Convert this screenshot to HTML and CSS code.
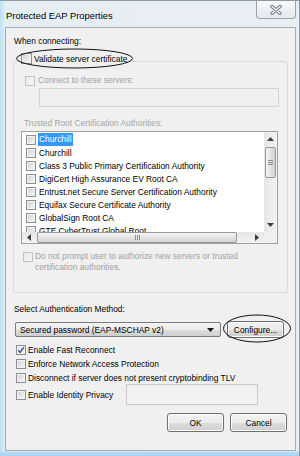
FILE: index.html
```html
<!DOCTYPE html>
<html>
<head>
<meta charset="utf-8">
<link rel="stylesheet" href="styles.css">
</head>
<body>
<div class="window">
  <div class="titlebar">
    <span class="title">Protected EAP Properties</span>
    <div class="close">
      <svg width="12" height="10" viewBox="0 0 12 10">
        <path d="M2 1.5 L10 8.5 M10 1.5 L2 8.5" stroke="#6e7884" stroke-width="3.4" stroke-linecap="round"/>
        <path d="M2 1.5 L10 8.5 M10 1.5 L2 8.5" stroke="#eef1f4" stroke-width="1.6" stroke-linecap="round"/>
      </svg>
    </div>
  </div>
  <div class="client">
    <div class="when">When connecting:</div>
    <div class="group">
      <div class="legend"><span class="cb big"></span><span>Validate server certificate</span></div>
      <div class="row connect dis"><span class="cb off"></span><span>Connect to these servers:</span></div>
      <div class="servers"></div>
      <div class="trusted">Trusted Root Certification Authorities:</div>
      <div class="list">
        <div class="items">
          <div class="item"><span class="cb"></span><span class="sel">Churchill</span></div>
          <div class="item"><span class="cb"></span><span class="txt">Churchill</span></div>
          <div class="item"><span class="cb"></span><span class="txt">Class 3 Public Primary Certification Authority</span></div>
          <div class="item"><span class="cb"></span><span class="txt">DigiCert High Assurance EV Root CA</span></div>
          <div class="item"><span class="cb"></span><span class="txt">Entrust.net Secure Server Certification Authority</span></div>
          <div class="item"><span class="cb"></span><span class="txt">Equifax Secure Certificate Authority</span></div>
          <div class="item"><span class="cb"></span><span class="txt">GlobalSign Root CA</span></div>
          <div class="item"><span class="cb"></span><span class="txt">GTE CyberTrust Global Root</span></div>
        </div>
        <div class="vscroll">
          <div class="arrow"><svg width="7" height="4" viewBox="0 0 7 4"><path d="M0 4 L3.5 0 L7 4Z" fill="#3c3c3c"/></svg></div>
          <div class="vthumb"><span class="grip"></span><span class="grip"></span><span class="grip"></span></div>
          <div class="spacer"></div>
          <div class="arrow"><svg width="7" height="4" viewBox="0 0 7 4"><path d="M0 0 L3.5 4 L7 0Z" fill="#3c3c3c"/></svg></div>
        </div>
        <div class="hscroll">
          <div class="arrow"><svg width="4" height="7" viewBox="0 0 4 7"><path d="M4 0 L0 3.5 L4 7Z" fill="#3c3c3c"/></svg></div>
          <div class="hthumb"><span class="vgrip"></span><span class="vgrip"></span><span class="vgrip"></span></div>
          <div class="spacer"></div>
          <div class="arrow"><svg width="4" height="7" viewBox="0 0 4 7"><path d="M0 0 L4 3.5 L0 7Z" fill="#3c3c3c"/></svg></div>
        </div>
        <div class="corner"></div>
      </div>
      <div class="noprompt dis"><span class="cb off"></span><span>Do not prompt user to authorize new servers or trusted<br>certification authorities.</span></div>
    </div>
    <div class="method-label">Select Authentication Method:</div>
    <div class="method-row">
      <div class="select"><span>Secured password (EAP-MSCHAP v2)</span>
        <svg width="7" height="4" viewBox="0 0 7 4"><path d="M0 0 L3.5 4 L7 0Z" fill="#1a1a1a"/></svg>
      </div>
      <div class="btn configure">Configure...</div>
    </div>
    <div class="checks">
      <div class="check"><span class="cb checked"><svg width="8" height="8" viewBox="0 0 8 8"><path d="M1.2 4.2 L3.1 6.4 L6.9 1.2" fill="none" stroke="#3d5aa0" stroke-width="1.5"/></svg></span><span>Enable Fast Reconnect</span></div>
      <div class="check"><span class="cb"></span><span>Enforce Network Access Protection</span></div>
      <div class="check"><span class="cb"></span><span>Disconnect if server does not present cryptobinding TLV</span></div>
      <div class="check identity"><span class="cb"></span><span class="idlabel">Enable Identity Privacy</span><div class="idfield"></div></div>
    </div>
    <div class="buttons">
      <div class="btn">OK</div>
      <div class="btn">Cancel</div>
    </div>
  </div>
</div>
<svg class="marks" width="300" height="456" viewBox="0 0 300 456">
  <ellipse cx="74.5" cy="58.5" rx="58" ry="9.5" fill="none" stroke="#111" stroke-width="1"/>
  <ellipse cx="257" cy="328.5" rx="33.5" ry="13.5" fill="none" stroke="#111" stroke-width="1"/>
</svg>
</body>
</html>
```
FILE: styles.css
```css
* { box-sizing: border-box; }
html, body { margin: 0; padding: 0; }
body {
  width: 300px;
  height: 456px;
  overflow: hidden;
  position: relative;
  font-family: "Liberation Sans", Arial, sans-serif;
  font-size: 8.4px;
  color: #000;
  background: #fff;
}
.window {
  width: 300px;
  height: 456px;
  display: flex;
  flex-direction: column;
  border-top: 1px solid #8d99a5;
  border-right: 1px solid #8d99a5;
  background:
    linear-gradient(to bottom, transparent 450px, #b9dcf3 451px, #a6cfee 456px),
    linear-gradient(to right, #b8e2f4 0, #e6edf3 5px, #e9eef3 100%);
}
.titlebar {
  height: 26px;
  flex: none;
  display: flex;
  justify-content: space-between;
  align-items: flex-start;
}
.title {
  padding: 8px 0 0 6px;
  font-size: 9.4px;
  line-height: 13px;
  color: #000;
}
.close {
  width: 40px;
  height: 18px;
  margin-right: 3px;
  border: 1px solid #9aa4ae;
  border-top: none;
  border-radius: 0 0 4px 4px;
  background: linear-gradient(#f8fafc, #e4e9ee);
  display: flex;
  align-items: center;
  justify-content: center;
}
.client {
  flex: 1;
  margin: 0 3px 5px 5px;
  border: 1px solid #a4aeb8;
  background: #f0f0f0;
  display: flex;
  flex-direction: column;
}
.when { margin: 7px 0 0 8px; line-height: 12px; }
.group {
  flex: none;
  margin: 14px 0 0 7px;
  width: 275px;
  height: 232px;
  border: 1px solid #d6dbe0;
  border-radius: 3px;
  display: flex;
  flex-direction: column;
}
.legend {
  margin: -10px 0 0 6px;
  height: 13px;
  width: max-content;
  padding: 0 2px 0 1px;
  background: #f0f0f0;
  display: flex;
  align-items: center;
  gap: 2px;
}
.cb {
  flex: none;
  width: 10px;
  height: 10px;
  border: 1px solid #8e8f8f;
  background: linear-gradient(135deg, #c9cdd2 0%, #e6e7e8 55%, #f7f7f7 100%);
  box-shadow: inset 0 0 0 1px #f3f3f3;
  display: flex;
  align-items: center;
  justify-content: center;
}
.cb.big { width: 11px; height: 11px; }
.cb.off {
  border-color: #c3c3c3;
  background: linear-gradient(135deg, #e8e8e8, #f6f6f6);
  box-shadow: none;
}
.cb.checked { background: linear-gradient(135deg, #dfe3e8, #f8f8f8); }
.dis { color: #a2a2a2; }
.row { display: flex; align-items: center; gap: 3px; line-height: 13px; }
.connect { margin: 9px 0 0 11px; }
.servers {
  margin: 1px 0 0 25px;
  width: 240px;
  height: 19px;
  border: 1px solid #d2d5d8;
  background: #f0f0f0;
}
.trusted { margin: 10px 0 0 10px; line-height: 12px; color: #a6a6a6; }
.list {
  margin: 2px 0 0 7px;
  width: 257px;
  height: 113px;
  border: 1px solid #a0a0a0;
  background: #fff;
  display: grid;
  grid-template-columns: 1fr 13px;
  grid-template-rows: 1fr 11px;
}
.items { overflow: hidden; padding-top: 1px; }
.item {
  display: flex;
  align-items: center;
  height: 13px;
  padding-left: 4px;
  gap: 2px;
  white-space: nowrap;
}
.item .txt { padding: 0 1px; }
.sel {
  background: #3399ff;
  color: #fff;
  padding: 0 1px;
  line-height: 13px;
}
.vscroll {
  display: flex;
  flex-direction: column;
  background: linear-gradient(to right, #e6e6e6, #f3f3f3);
}
.vscroll .arrow { height: 14px; display: flex; align-items: center; justify-content: center; }
.vthumb {
  margin: 1px 0 0 1px;
  width: 11px;
  height: 31px;
  border: 1px solid #989898;
  border-radius: 2px;
  background: linear-gradient(to right, #f4f4f4, #e4e4e4 50%, #d2d2d2);
  display: flex;
  flex-direction: column;
  align-items: center;
  justify-content: center;
  gap: 1px;
}
.grip { width: 5px; height: 1px; background: #8a8a8a; }
.spacer { flex: 1; }
.hscroll {
  display: flex;
  background: linear-gradient(to bottom, #e6e6e6, #f3f3f3);
}
.hscroll .arrow { width: 14px; display: flex; align-items: center; justify-content: center; }
.hthumb {
  margin-left: 1px;
  width: 200px;
  height: 11px;
  border: 1px solid #989898;
  border-radius: 2px;
  background: linear-gradient(to bottom, #f4f4f4, #e4e4e4 50%, #d2d2d2);
  display: flex;
  align-items: center;
  justify-content: center;
  gap: 1px;
}
.vgrip { width: 1px; height: 5px; background: #8a8a8a; }
.corner { background: #f0f0f0; }
.noprompt {
  margin: 7px 0 0 9px;
  display: flex;
  align-items: flex-start;
  gap: 2px;
  line-height: 10.5px;
}
.noprompt .cb { margin-top: 1px; }
.method-label { margin: 10px 0 0 8px; line-height: 12px; }
.method-row {
  margin: 6px 0 0 9px;
  display: flex;
  align-items: center;
  gap: 6px;
}
.select {
  width: 206px;
  height: 15px;
  border: 1px solid #7b7b7b;
  border-radius: 2px;
  background: linear-gradient(to bottom, #f3f3f3 0%, #ebebeb 50%, #dddddd 51%, #cfcfcf 100%);
  display: flex;
  align-items: center;
  justify-content: space-between;
  padding: 0 6px 0 4px;
}
.btn {
  width: 57px;
  height: 19px;
  border: 1px solid #707070;
  border-radius: 3px;
  background: linear-gradient(to bottom, #f2f2f2 0%, #ebebeb 50%, #dddddd 51%, #cfcfcf 100%);
  box-shadow: inset 0 0 0 1px #fbfbfb;
  display: flex;
  align-items: center;
  justify-content: center;
}
.configure { height: 17px; }
.checks { margin: 5px 0 0 10px; display: flex; flex-direction: column; }
.check { display: flex; align-items: center; gap: 2px; height: 14px; white-space: nowrap; }
.identity { margin-top: -1px; height: 21px; }
.idlabel { flex: 0 0 96px; }
.idfield {
  width: 132px;
  height: 21px;
  border: 1px solid #c7c9cc;
  background: #f2f2f2;
}
.buttons {
  margin: 8px 8px 0 0;
  display: flex;
  justify-content: flex-end;
  gap: 6px;
}
.marks { position: absolute; left: 0; top: 0; pointer-events: none; }
```
